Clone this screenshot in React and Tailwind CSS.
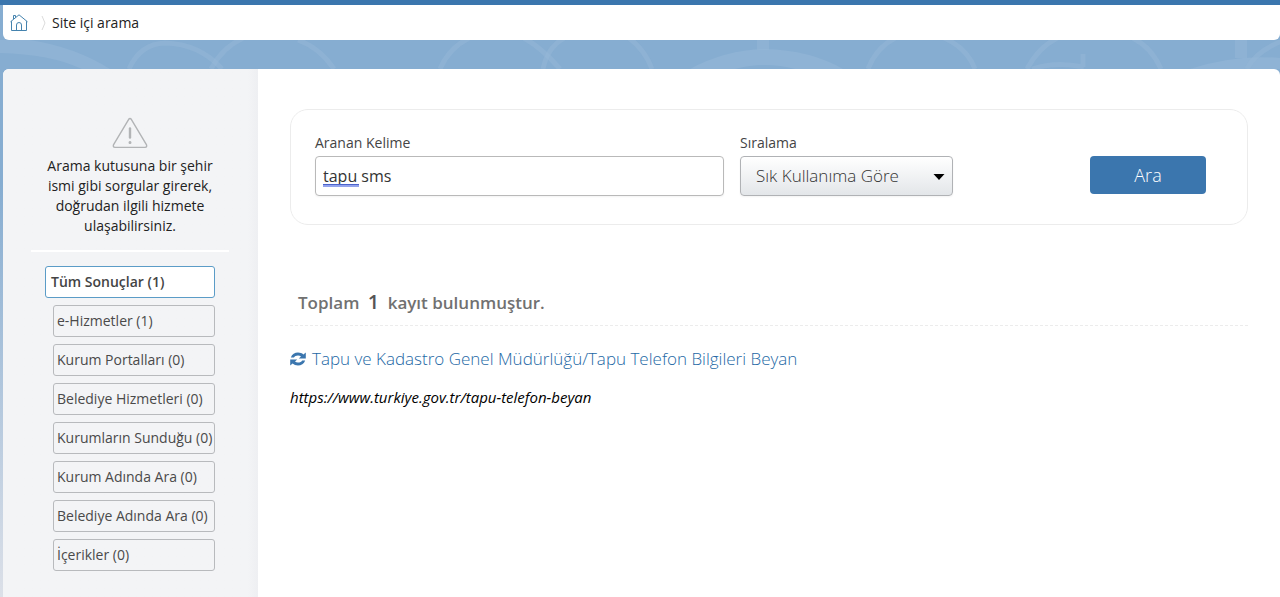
import { useState } from "react";

const filters = [
  { id: "portal", label: "e-Hizmetler", count: 1 },
  { id: "kurum", label: "Kurum Portalları", count: 0 },
  { id: "belediye", label: "Belediye Hizmetleri", count: 0 },
  { id: "sunulan", label: "Kurumların Sunduğu", count: 0 },
  { id: "kurum-adi", label: "Kurum Adında Ara", count: 0 },
  { id: "belediye-adi", label: "Belediye Adında Ara", count: 0 },
  { id: "icerik", label: "İçerikler", count: 0 },
];

function HomeIcon() {
  return (
    <svg
      className="h-[18px] w-[18px]"
      viewBox="0 0 18 18"
      fill="none"
      stroke="#4583ae"
      strokeLinejoin="round"
    >
      <path d="M1.5 7.2V16.5H16.5V7.2M6.5 16.5V11Q6.5 8.5 9 8.5T11.5 11V16.5" />
      <path d="M0.5 7.8L9 0.8L17.5 7.8" />
      <path d="M3.5 5V1.5H5.5V3.5" />
    </svg>
  );
}

function WarningIcon() {
  return (
    <svg
      className="mx-auto h-8 w-9"
      viewBox="0 0 36 32"
      fill="none"
      stroke="#b2b4b6"
      strokeLinecap="round"
      strokeLinejoin="round"
    >
      <path
        strokeWidth="1.4"
        d="M16.7 2.3Q18 0.6 19.3 2.3L34.4 27.6Q35.4 30.2 33 30.4H3Q0.6 30.2 1.6 27.6Z"
      />
      <path strokeWidth="2.4" d="M18 11.5V20.5" />
      <circle cx="18" cy="25.5" r="0.9" strokeWidth="1.2" fill="#b2b4b6" />
    </svg>
  );
}

function RefreshIcon() {
  return (
    <svg
      className="h-4 w-4 shrink-0"
      viewBox="0 0 16 16"
      fill="#3b76ae"
    >
      <path d="M0.8 6.6C2 3.2 4.8 1.5 8 1.5C10.2 1.5 12 2.2 13.4 3.4L15.8 1.4V7.6H8.8L11 5.6C10.2 4.9 9.2 4.5 8 4.5C6 4.5 4.6 5.3 3.9 6.6Z" />
      <path d="M15.2 9.4C14 12.8 11.2 14.5 8 14.5C5.8 14.5 4 13.8 2.6 12.6L0.2 14.6V8.4H7.2L5 10.4C5.8 11.1 6.8 11.5 8 11.5C10 11.5 11.4 10.7 12.1 9.4Z" />
    </svg>
  );
}

function Pattern() {
  return (
    <svg
      className="block h-[29px] w-full"
      viewBox="0 0 1280 29"
      preserveAspectRatio="xMinYMin slice"
      fill="none"
      stroke="#95b8d8"
      strokeWidth="5"
    >
      <path
        fill="#8fb3d5"
        stroke="none"
        d="M0 0H30Q75 7 110 29H82Q50 14 0 13ZM690 29Q725 10 765 9Q810 10 843 29H795Q765 21 735 29ZM1190 29Q1235 14 1280 18V29Z"
      />
      <g strokeOpacity="0.5">
        <path d="M129 29Q140 4 165 3Q200 4 222 29" />
        <path d="M211 29Q222 8 243 -2" />
        <path d="M298 0Q320 8 334 29" />
        <path d="M440 29Q449 8 469 -2" />
        <path d="M524 -2Q542 8 560 29" />
        <path d="M543 29Q547 8 564 -2" />
        <path d="M629 -2Q645 10 652 29" />
        <path d="M868 29Q876 8 895 -2" />
        <path d="M944 -2Q967 8 975 29" />
        <path d="M1027 29Q1038 8 1057 -2" />
        <path d="M1133 -2Q1152 8 1161 29" />
        <path d="M1032 29Q1055 21 1084 27M1083 14V27" />
        <path d="M1247 29Q1255 12 1282 1" />
        <path strokeWidth="12" d="M763 0V10M1241 0V18" />
      </g>
    </svg>
  );
}

export default function App() {
  const [query, setQuery] = useState("tapu sms");
  const [active, setActive] = useState("all");

  return (
    <div className="flex min-h-screen flex-col border-t-[5px] border-[#3b76ae] bg-linear-to-b from-[#86add1] from-30% to-[#dce0e8] font-['Open_Sans',sans-serif] text-sm text-[#222]">
      <nav className="ml-[3px] flex h-[35px] items-center rounded-b-md bg-white pl-[7px]">
        <a href="#" aria-label="Ana Sayfa">
          <HomeIcon />
        </a>
        <svg
          className="ml-3 h-4 w-2"
          viewBox="0 0 8 16"
          fill="none"
          stroke="#dcdcdc"
        >
          <path d="M2 1L5 8L2 15" />
        </svg>
        <span className="ml-1">Site içi arama</span>
      </nav>

      <div className="bg-[#86add1]">
        <Pattern />
      </div>

      <div className="ml-[3px] flex flex-1 overflow-hidden rounded-t-md bg-white">
        <aside className="w-[255px] shrink-0 bg-linear-to-r from-[#f3f4f6] from-96% to-[#eeeff2] pt-12 pr-[43px] pb-6 pl-[42px]">
          <WarningIcon />
          <p className="mt-[7px] text-center leading-5">
            Arama kutusuna bir şehir ismi gibi sorgular girerek, doğrudan ilgili
            hizmete ulaşabilirsiniz.
          </p>
          <hr className="-mx-3.5 mt-3.5 border-t-2 border-white" />

          <div className="mt-3.5 flex flex-col gap-[7px]">
            <button
              aria-pressed={active === "all"}
              onClick={() => setActive("all")}
              className="h-8 rounded-[3px] border border-[#5b9cc7] bg-white pl-[5px] text-left font-semibold text-[#444]"
            >
              Tüm Sonuçlar (1)
            </button>
            {filters.map((filter) => (
              <button
                key={filter.id}
                aria-pressed={active === filter.id}
                onClick={() => setActive(filter.id)}
                className="ml-2 h-8 rounded-[3px] border border-[#b8babd] pl-[3px] text-left whitespace-nowrap text-[#4a4a4a]"
              >
                {filter.label} ({filter.count})
              </button>
            ))}
          </div>
        </aside>

        <main className="min-w-0 flex-1 px-8 pt-10">
          <form
            onSubmit={(e) => e.preventDefault()}
            className="flex items-start rounded-[18px] border border-[#ececec] pt-6 pr-[41px] pb-7 pl-6 text-[#444]"
          >
            <div className="min-w-0 flex-1">
              <label htmlFor="query" className="block h-[22px] leading-[18px]">
                Aranan Kelime
              </label>
              <div className="relative">
                <input
                  id="query"
                  type="text"
                  value={query}
                  spellCheck={false}
                  onChange={(e) => setQuery(e.target.value)}
                  className="block h-10 w-full rounded border border-[#b9b9b9] bg-white px-[7px] text-base text-[#333] shadow-xs"
                />
                {query.startsWith("tapu") && (
                  <span className="pointer-events-none absolute top-7 left-2 h-[3px] w-9 border-t border-[#4a63cc] bg-[#93a3ec]" />
                )}
              </div>
            </div>

            <div className="ml-4">
              <label htmlFor="sort" className="block h-[22px] leading-[18px]">
                Sıralama
              </label>
              <div className="relative">
                <select
                  id="sort"
                  className="block h-10 w-[213px] appearance-none rounded border border-[#b0b2b5] bg-linear-to-b from-white to-[#e3e6e9] pl-[15px] text-[17px] font-light text-[#333] shadow-xs"
                >
                  <option>Sık Kullanıma Göre</option>
                  <option>Alfabetik</option>
                </select>
                <svg
                  className="pointer-events-none absolute top-[18px] right-2 h-1.5 w-3"
                  viewBox="0 0 12 6"
                >
                  <path d="M0.5 0H11.5L6 6Z" fill="#000" />
                </svg>
              </div>
            </div>

            <button
              type="submit"
              className="mt-[22px] ml-[137px] h-[38px] w-[116px] rounded bg-[#3b76ae] text-lg font-light text-white"
            >
              Ara
            </button>
          </form>

          <h2 className="mt-[63px] border-b border-dashed border-[#ececec] pb-2 pl-2 text-[17px] leading-7 font-semibold text-[#717171]">
            Toplam <span className="mx-1 text-xl text-[#555]">1</span> kayıt
            bulunmuştur.
          </h2>

          <a
            href="#"
            className="mt-[21px] flex items-center gap-1.5 text-[17px] leading-6 font-light text-[#2468a5]"
          >
            <RefreshIcon />
            Tapu ve Kadastro Genel Müdürlüğü/Tapu Telefon Bilgileri Beyan
          </a>
          <p className="mt-4 text-[15px] leading-5 text-black italic">
            https://www.turkiye.gov.tr/tapu-telefon-beyan
          </p>
        </main>
      </div>
    </div>
  );
}
